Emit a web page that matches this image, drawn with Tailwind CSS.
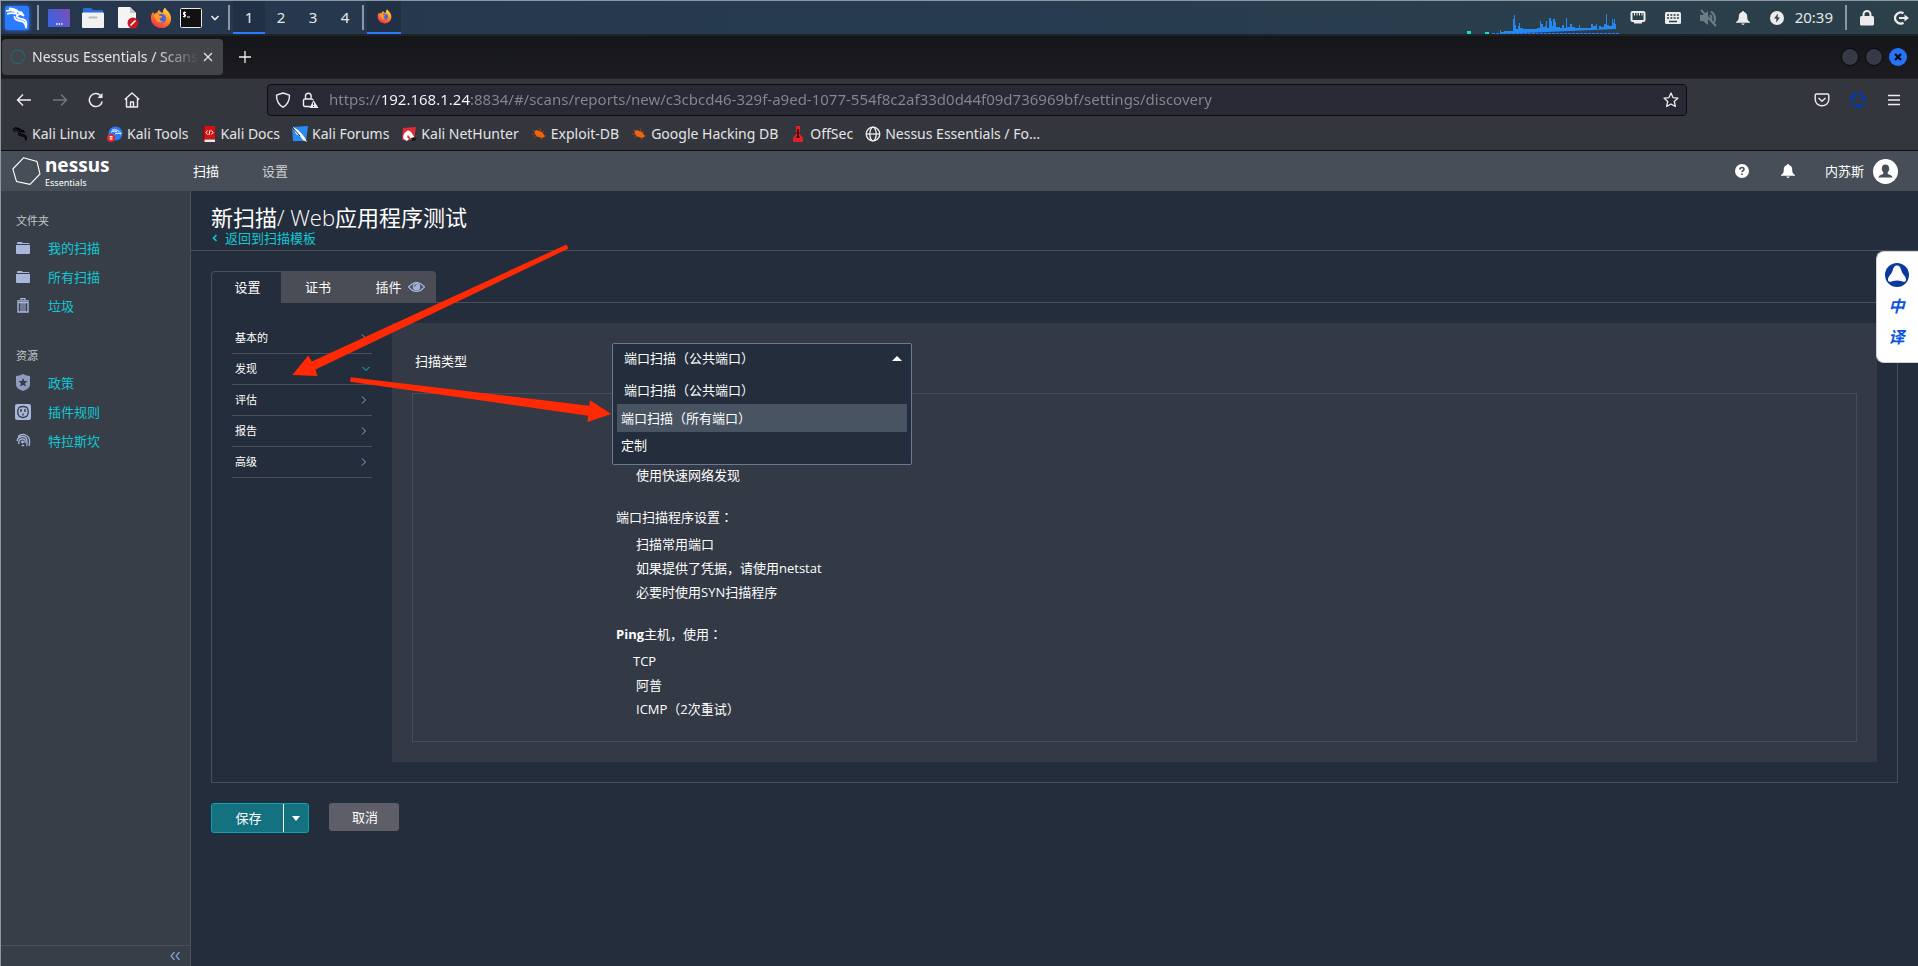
<!DOCTYPE html>
<html lang="zh-CN">
<head>
<meta charset="utf-8">
<title>Nessus Essentials / Scans</title>
<script src="https://cdn.jsdelivr.net/npm/@tailwindcss/browser@4"></script>
</head>
<body class="relative min-h-screen flex flex-col overflow-x-hidden border-t border-l border-[#8b98a1] bg-[#242d3b] text-white font-['Open_Sans','Noto_Sans_CJK_SC',sans-serif] text-[13px] leading-5">

<svg class="absolute size-0" aria-hidden="true">
  <defs>
    <linearGradient id="fx" x1="0.8" y1="0" x2="0.2" y2="1"><stop offset="0" stop-color="#ffe14a"/><stop offset=".45" stop-color="#ff8a25"/><stop offset="1" stop-color="#f0264e"/></linearGradient>
    <linearGradient id="desk" x1="0" y1="0.6" x2="1" y2="0.2"><stop offset="0" stop-color="#3c63e0"/><stop offset="1" stop-color="#7a4fb8"/></linearGradient>
    <symbol id="firefox" viewBox="0 0 24 24">
      <path d="M12.500 23C5.500 23 1 18 1 12c0-3 1-5 2.500-7 .1 1 .4 1.800 1 2.500C5.500 6.500 7 6 8 6.200 8 5 9 3.500 10 3c0 2 2.500 3 4 3.200 0-2 .5-4.200 2.500-5.700.5 3 6.500 5 6.500 12 0 6-4.500 10.500-10.500 10.500z" fill="url(#fx)"/>
      <circle cx="12.500" cy="12.500" r="5" fill="#4b62d8"/>
      <path d="M4 9c3-2 5-1 6.500.5 1 .2 2 .2 3 .5-.5 1.500-2 2-3 2.500 0 2 1.500 3.500 4 3-1.500 2-6.500 2-8-1.500C5.500 12 5 10.500 4 9z" fill="#ff9a2b"/>
    </symbol>
    <symbol id="dragon" viewBox="0 0 24 24">
      <path d="M1 5c4-1 8-1 11 1.500M2 8c4-1.500 7-1 10 0M4 2.500c4 0 7 1 9.500 3.500l3 .5 2 3-3.500-1.500c-3 .5-4 2-2.500 3.500s7 .5 8.500 4c.8 2 .5 4 0 6-.2-3.500-2-6-5.500-6.500-4-.5-6.500-2-6-5" fill="none" stroke="currentColor" stroke-width="1.800" stroke-linejoin="round"/>
    </symbol>
    <symbol id="bug" viewBox="0 0 16 16">
      <path d="M2 4l3 2M1 8h4M3 12l3-2M9 2l1 4M13 5l-2 2M15 10l-3-.5M11 14l-1-3" stroke="#9a4212" stroke-width="1" fill="none"/>
      <path d="M3.500 5.500C5 3.500 7 4 8.500 5.200c2.500 0 4 2.300 5.300 5.300-1.500 1.500-4 1.800-5.800.6C5.500 11 4 8.500 3.500 5.500z" fill="#f0640f"/>
    </symbol>
    <symbol id="folder" viewBox="0 0 14 12"><path d="M1 2V1q0-1 1-1h3.500q1 0 1 1h6q1 0 1 1z" fill="#a9b6dc"/><path d="M0 3h14v8q0 1-1 1H1q-1 0-1-1z" fill="#a9b6dc"/></symbol>
    <symbol id="bell" viewBox="0 0 14 14"><path d="M7 0q1 0 1 1c2.400.6 3.200 2.400 3.200 4.500 0 3 .6 4.300 2.800 5.500v.800H0V11c2.200-1.200 2.800-2.500 2.800-5.500C2.800 3.400 3.600 1.600 6 1q0-1 1-1z" fill="currentColor"/><path d="M5.300 12.600h3.400q-.4 1.400-1.700 1.400t-1.700-1.400z" fill="currentColor"/></symbol>
    <symbol id="mark" viewBox="0 0 24 24"><circle cx="12" cy="12" r="12" fill="#0a3a9c"/><path d="M12 2.500c3 0 3.600 2.500 4.500 5.500s4.500 5.500 4.500 8.500c0 3-3 2.500-5 1.500q-4-1.200-8 0c-2 1-5 1.500-5-1.500 0-3 3.600-5.500 4.500-8.500S9 2.500 12 2.500z" fill="var(--hole)"/></symbol>
  </defs>
</svg>

<!-- Desktop panel -->
<header class="flex items-stretch h-[33px] shrink-0 bg-linear-to-r from-[#26364d] via-[#263b50] to-[#2c404a] text-[#e4e8ea] font-['Noto_Sans',sans-serif] text-[15px]">
  <div class="flex items-center pl-1">
    <button aria-label="Applications" class="size-6 bg-[#2a7bff] rounded-xs shadow-[0_0_4px_#2a7bff] flex items-center justify-center text-white"><svg class="size-6"><use href="#dragon"/></svg></button>
    <span class="ml-2 w-0.5 h-[25px] bg-[#8b98a3]"></span>
    <button aria-label="Desktop" class="ml-[9px] w-[22px] h-[18px]"><svg viewBox="0 0 22 18" class="w-full h-full"><rect width="22" height="18" rx="1" fill="url(#desk)"/><path d="M8 15h1.500M10.500 15h1.500M13 15h1.500" stroke="#fff" stroke-width="1.500"/></svg></button>
    <button aria-label="Files" class="ml-3 w-[22px] h-5"><svg viewBox="0 0 22 20" class="w-full h-full"><path d="M1 6V1q0-1 1-1h7l2 2h9q1 0 1 1v3z" fill="#2b6cdc"/><rect y="4.500" width="22" height="15.500" rx="1" fill="#f2f2f2"/><rect x="6.500" y="8.500" width="9" height="2" rx="1" fill="#bbb"/></svg></button>
    <button aria-label="Text editor" class="ml-3.5 w-[22px] h-[22px]"><svg viewBox="0 0 22 22" class="w-full h-full"><path d="M1 0h11l6 6v15H1q-1 0-1-1V1q0-1 1-1z" fill="#f4f4f4"/><path d="M12 0l6 6h-6z" fill="#c8c8c8"/><circle cx="15" cy="16" r="5.500" fill="#c7161d"/><path d="M12.500 18.500l5-5" stroke="#fff" stroke-width="1.600"/></svg></button>
    <button aria-label="Firefox" class="ml-2.5 size-[22px]"><svg class="size-full"><use href="#firefox"/></svg></button>
    <button aria-label="Terminal" class="ml-2 w-[22px] h-5"><svg viewBox="0 0 22 20" class="w-full h-full"><rect x=".5" y=".5" width="21" height="19" rx="1" fill="#111" stroke="#e8e8e8"/><path d="M6 4.500H3.500v2H5.500v2H3M4.500 3.500v6M7 9h3" stroke="#fff" fill="none"/></svg></button>
    <button aria-label="More" class="ml-2 w-2.5 h-2"><svg viewBox="0 0 10 8" class="w-full h-full"><path d="M1.500 2l3.500 3.500L8.500 2" fill="none" stroke="#e8e8e8" stroke-width="1.600"/></svg></button>
    <span class="ml-2 w-0.5 h-[25px] bg-[#8b98a3]"></span>
  </div>
  <nav class="flex ml-[3px]" aria-label="Workspaces">
    <button class="w-8 pb-0.5 bg-[#213044] shadow-[inset_0_-2px_#2a7bff]">1</button>
    <button class="w-8 pb-0.5">2</button>
    <button class="w-8 pb-0.5">3</button>
    <button class="w-8 pb-0.5">4</button>
  </nav>
  <div class="flex items-center ml-px"><span class="w-0.5 h-[25px] bg-[#8b98a3]"></span></div>
  <button aria-label="Firefox window" class="ml-[3px] w-[34px] bg-[#213044] border-b-2 border-[#2a7bff] flex items-center justify-center"><svg class="size-[15px]"><use href="#firefox"/></svg></button>
  <div class="ml-auto flex items-center">
    <svg class="self-end w-[153px] h-5" viewBox="0 0 153 20" aria-label="CPU graph"><path d="M0 18.500h4M18 19.500h4" stroke="#12e0c8" stroke-width="3"/><path d="M25 19.500h128" stroke="#2a7bff" stroke-dasharray="3 1"/><path d="M33 20v-4h1v2h3v-1h9v-12h1v-4h1v10h1v4h2v-3h1v-3h1v5h3v1h14v-1h3v-7h1v3h2v3h2v-1h1v-5h1v7h2v-10h2v3h1v5h1v-7h2v3h1v5h4v1h2v-3h2v3h2v-10h1v9h3v-3h2v3h3v1h4v-3h1v3h11v-4h2v2h3v-2h1v5h2v-3h2v1h3v-3h2v-11h1v12h2v1h3v-7h1v4h1v-4h1v5h1v5z" fill="#2488ee"/></svg>
    <svg class="ml-[10px] w-4 h-[15px]" viewBox="0 0 16 15"><rect x="1.500" y="2" width="13" height="9" rx="1" fill="none" stroke="#ececec" stroke-width="2"/><path d="M4 12h8v1.500H4z" fill="#ececec"/><path d="M4.500 2v3.500M7 2v3.500M9.500 2v3.500M12 2v3.500" stroke="#ececec"/></svg>
    <svg class="ml-[19px] w-4 h-3" viewBox="0 0 16 12"><rect width="16" height="12" rx="1.500" fill="#ececec"/><path d="M2 3h12M2 6h12" stroke="#2b3e4a" stroke-width="1.600" stroke-dasharray="2 1.300"/><path d="M4 9.500h8" stroke="#2b3e4a" stroke-width="1.500"/></svg>
    <svg class="ml-[18px] w-[19px] h-[18px]" viewBox="0 0 19 18" fill="none" stroke="#6d7d86" stroke-width="2"><path d="M1 6h3l5-4v14l-5-4H1z" fill="#6d7d86" stroke="none"/><path d="M11 6q3 3 0 6M12 2.500q6 5 3 11M2 1l15 16"/></svg>
    <svg class="ml-[18px] w-3.5 h-3.5 text-[#ececec]"><use href="#bell"/></svg>
    <svg class="ml-5 size-3.5" viewBox="0 0 14 14"><circle cx="7" cy="7" r="7" fill="#ececec"/><path d="M8 2.500L4 7.500h2.500L6 11.500l4-5H7.500z" fill="#2b3e4a"/></svg>
    <time class="ml-[11px] pb-0.5">20:39</time>
    <span class="ml-3 w-0.5 h-[25px] bg-[#8b98a3]"></span>
    <button aria-label="Lock screen" class="ml-[13px]"><svg class="w-3.5 h-4" viewBox="0 0 14 16"><rect y="6" width="14" height="9.500" rx="1.500" fill="#ececec"/><path d="M3.500 7V4.500a3.500 3.500 0 017 0V7" fill="none" stroke="#ececec" stroke-width="2"/></svg></button>
    <button aria-label="Log out" class="ml-5 mr-[9px]"><svg class="w-[15px] h-3.5" viewBox="0 0 15 14"><path d="M9.500 2.300A5.500 5.500 0 109.500 11.700" fill="none" stroke="#ececec" stroke-width="2.200"/><path d="M5 7h6" stroke="#ececec" stroke-width="2"/><path d="M10.500 3.500L15 7l-4.500 3.500z" fill="#ececec"/></svg></button>
  </div>
</header>

<!-- Browser window -->
<div class="shrink-0 bg-[#34363d] text-[#e4e4e6] font-['Noto_Sans',sans-serif] text-[14px]">
  <div class="flex items-center h-[44px] border-t-2 border-[#20232a] bg-linear-to-b from-[#15161a] to-[#1b1b20]">
    <div class="flex items-center w-[221px] h-9 ml-px rounded bg-[#43444a] pl-2">
      <svg class="size-4 shrink-0" viewBox="0 0 16 16"><path d="M6 .8l7 1.500 2.200 6.200-4.600 6.300-6.700-.6L.8 8.600 2.200 3.500z" fill="none" stroke="#1d6c7c"/></svg>
      <span class="ml-1.5 w-[167px] overflow-hidden whitespace-nowrap mask-r-from-75% mask-r-to-100%">Nessus Essentials / Scans</span>
      <button aria-label="Close tab" class="ml-1"><svg class="size-2.5" viewBox="0 0 10 10"><path d="M1 1l8 8M9 1L1 9" stroke="#e4e4e6" stroke-width="1.200"/></svg></button>
    </div>
    <button aria-label="New tab" class="ml-4"><svg class="size-3" viewBox="0 0 12 12"><path d="M6 0v12M0 6h12" stroke="#f0f0f0" stroke-width="1.300"/></svg></button>
    <div class="ml-auto mr-[11px] flex gap-1.5">
      <button aria-label="Minimize" class="size-[18px] rounded-full bg-[#353a46] border border-[#08080a]"></button>
      <button aria-label="Maximize" class="size-[18px] rounded-full bg-[#353a46] border border-[#08080a]"></button>
      <button aria-label="Close" class="size-[18px] rounded-full bg-[#2673f5] flex items-center justify-center"><svg class="size-2" viewBox="0 0 8 8"><path d="M1 1l6 6M7 1L1 7" stroke="#0a0a12" stroke-width="2.200"/></svg></button>
    </div>
  </div>
  <div class="flex items-center h-[38px] pt-1 border-t border-[#22232a]">
    <div class="flex items-center gap-5 pl-[15px] w-[266px] shrink-0">
      <button aria-label="Back"><svg class="size-4" viewBox="0 0 16 16" fill="none" stroke="#eee" stroke-width="1.400"><path d="M15 8H1.500M7 2.500L1.500 8 7 13.500"/></svg></button>
      <button aria-label="Forward"><svg class="size-4" viewBox="0 0 16 16" fill="none" stroke="#76777d" stroke-width="1.400"><path d="M1 8h13.500M9 2.500L14.500 8 9 13.500"/></svg></button>
      <button aria-label="Reload"><svg class="size-4" viewBox="0 0 16 16" fill="none" stroke="#eee" stroke-width="1.500"><path d="M14.200 9.500A6.500 6.500 0 1112.500 3.500"/><path d="M14.500 1v5H9.500z" fill="#eee" stroke="none"/></svg></button>
      <button aria-label="Home"><svg class="size-4" viewBox="0 0 16 16" fill="none" stroke="#eee" stroke-width="1.400" stroke-linejoin="round"><path d="M.8 7.500L8 1l7.200 6.500M2.500 6.500V15h11V6.500M6.500 15v-5h3v5"/></svg></button>
    </div>
    <label class="flex items-center flex-1 h-8 max-w-[1420px] rounded border border-[#0d0d11] bg-[#282935] px-[7px]">
      <svg class="size-4 shrink-0" viewBox="0 0 16 16"><path d="M8 1l6.500 2.200c0 5-1.200 9-6.500 12C2.700 12.200 1.500 8.200 1.500 3.200z" fill="none" stroke="#eee" stroke-width="1.400" stroke-linejoin="round"/></svg>
      <svg class="ml-[11px] w-[17px] h-4 shrink-0" viewBox="0 0 17 16"><path d="M8 14.500H3q-1.500 0-1.500-1.500V8.500Q1.500 7 3 7h6.500q1.200 0 1.500 1M3.500 7V4a2.800 2.800 0 015.600 0v3" fill="none" stroke="#eee" stroke-width="1.400"/><path d="M11.500 8l5 8h-9z" fill="#eee"/><path d="M11.500 10.500v2.500M11.500 14v1" stroke="#282935"/></svg>
      <input aria-label="Address" value="https://192.168.1.24:8834/#/scans/reports/new/c3cbcd46-329f-a9ed-1077-554f8c2af33d0d44f09d736969bf/settings/discovery" class="ml-2.5 flex-1 min-w-0 pb-px outline-none text-[15px] text-transparent bg-clip-text bg-[linear-gradient(90deg,#85868e_52px,#fbfbfe_52px,#fbfbfe_142px,#85868e_142px)]">
      <button type="button" aria-label="Bookmark this page"><svg class="size-4" viewBox="0 0 16 16"><path d="M8 1l2 4.600 5 .5-3.700 3.400 1 5L8 12l-4.300 2.500 1-5L1 6.100l5-.5z" fill="none" stroke="#eee" stroke-width="1.300" stroke-linejoin="round"/></svg></button>
    </label>
    <div class="ml-auto flex items-center gap-5 pr-4">
      <button aria-label="Save to Pocket"><svg class="size-4" viewBox="0 0 16 16" fill="none" stroke="#eee" stroke-width="1.400" stroke-linejoin="round"><path d="M2.500 2h11q1.300 0 1.300 1.300V7.500a6.800 6.300 0 01-13.600 0V3.300Q1.200 2 2.500 2z"/><path d="M4.500 6L8 9.200 11.500 6"/></svg></button>
      <button aria-label="Translate extension"><svg class="size-4 [--hole:#34363d]"><use href="#mark"/></svg></button>
      <button aria-label="Menu"><svg class="size-4" viewBox="0 0 16 16"><path d="M2 3.500h12M2 8h12M2 12.500h12" stroke="#eee" stroke-width="1.300"/></svg></button>
    </div>
  </div>
  <nav aria-label="Bookmarks" class="flex items-center gap-3 h-[35px] pt-0.5 pl-[11px] border-b border-[#0d0d11] whitespace-nowrap">
    <a href="#" class="flex items-center gap-1"><svg class="size-4 text-black"><use href="#dragon"/></svg>Kali Linux</a>
    <a href="#" class="flex items-center gap-1"><svg class="size-4" viewBox="0 0 16 16"><circle cx="8.500" cy="7.500" r="7" fill="#2a7bf0"/><path d="M5 4c4-.500 7 0 9 4-2-1-4-1-6 0M4 6c2-1 5-1 6 0" fill="none" stroke="#fff"/><circle cx="4" cy="12" r="4" fill="#e02a2a"/><path d="M2.500 10.500h3M3.300 10.500v3.500M4.800 10.500v3.500" stroke="#fff" stroke-width=".8"/></svg>Kali Tools</a>
    <a href="#" class="flex items-center gap-1"><svg class="size-4" viewBox="0 0 16 16"><path d="M2 0h12v13H2z" fill="#d81010"/><path d="M2 13.500h12V16H2z" fill="#efe6e6"/><path d="M2 0h1.500v16H2z" fill="#8a0c0c"/><path d="M6.500 4.500L5 6.500l1.500 2M10.500 4.500L12 6.500l-1.500 2M9 4L8 9" stroke="#fff" fill="none"/></svg>Kali Docs</a>
    <a href="#" class="flex items-center gap-1"><svg class="size-4" viewBox="0 0 16 16"><path d="M0 1l16-1-2 15L1 15z" fill="#2a8af5"/><path d="M1 1l5 3 4 4 3 4 2 4-4-2-3-4-4-2z" fill="#fff"/><path d="M0 1l8 9" stroke="#222"/></svg>Kali Forums</a>
    <a href="#" class="flex items-center gap-1"><svg class="size-4" viewBox="0 0 16 16"><path d="M2 2l13-1-2 13H1z" fill="#e12a35"/><path d="M3 8q4-6 7-2l4 6-3 2-4-5q-2 2 1 4l-2 2Q0 13 3 8z" fill="#fff"/><path d="M10 12l4-1 1 3-4 1z" fill="#111"/></svg>Kali NetHunter</a>
    <a href="#" class="flex items-center gap-1"><svg class="size-4"><use href="#bug"/></svg>Exploit-DB</a>
    <a href="#" class="flex items-center gap-1"><svg class="size-4"><use href="#bug"/></svg>Google Hacking DB</a>
    <a href="#" class="flex items-center gap-1"><svg class="size-4" viewBox="0 0 16 16"><path d="M6 0h4v8l3 4v4H3v-4l3-4z" fill="#e3202a"/><path d="M8 3v9M6.500 7h3M6.500 11h3" stroke="#2a0508" stroke-width="1.500"/></svg>OffSec</a>
    <a href="#" class="flex items-center gap-1"><svg class="size-4" viewBox="0 0 16 16" fill="none" stroke="#eee" stroke-width="1.300"><circle cx="8" cy="8" r="6.800"/><ellipse cx="8" cy="8" rx="3.200" ry="6.800"/><path d="M1 8h14"/></svg>Nessus Essentials / Fo…</a>
  </nav>
</div>

<!-- Nessus top bar -->
<header class="flex items-center h-10 shrink-0 bg-[#474e57] pl-[11px] pr-5">
  <a href="#" class="flex items-center w-[181px]" aria-label="nessus Essentials">
    <svg class="w-[29px] h-7" viewBox="0 0 29 28"><path d="M11.500 .800L25 4.500l3 12.500-10 10.300-13.500-2.800L.8 12z" fill="none" stroke="#fff" stroke-width="1.100"/></svg>
    <span class="ml-1 flex flex-col font-['Noto_Sans',sans-serif]"><span class="text-[19px] leading-6 font-bold">nessus</span><span class="text-[9px] leading-3">Essentials</span></span>
  </a>
  <nav class="flex gap-[43px]"><a href="#">扫描</a><a href="#" class="text-[#cdd0d4]">设置</a></nav>
  <div class="ml-auto flex items-center">
    <button aria-label="Help"><svg class="size-3.5" viewBox="0 0 14 14"><circle cx="7" cy="7" r="7" fill="#fff"/><path d="M5 5.500q0-2 2-2t2 1.700q0 1-1 1.500t-1 1.500M7 9.500v1.600" fill="none" stroke="#474e57" stroke-width="1.600"/></svg></button>
    <button aria-label="Notifications" class="ml-8"><svg class="size-3.5"><use href="#bell"/></svg></button>
    <button class="ml-[30px] flex items-center gap-[9px]">内苏斯<svg class="size-[25px]" viewBox="0 0 25 25"><circle cx="12.500" cy="12.500" r="12.500" fill="#fff"/><path d="M12.500 5.500c2.500 0 3.700 1.700 3.700 4 0 1.600-.6 2.900-1.500 3.700v1.500c.8 1 4.800 1.300 4.800 3.800H5.500c0-2.500 4-2.800 4.800-3.800v-1.500c-.9-.8-1.500-2.100-1.500-3.700 0-2.300 1.200-4 3.700-4z" fill="#474e57"/></svg></button>
  </div>
</header>

<div class="flex flex-1">
  <!-- Sidebar -->
  <aside class="flex flex-col w-[190px] shrink-0 bg-[#383e47] border-r border-[#4b4f59] text-[#10c8d4]">
    <h2 class="pl-[15px] pt-5 text-[11px] text-[#c3c6ca]">文件夹</h2>
    <ul class="mt-0.5 pl-[15px]">
      <li><a href="#" class="flex items-center h-[29px]"><svg class="w-3.5 h-3"><use href="#folder"/></svg><span class="ml-[18px]">我的扫描</span></a></li>
      <li><a href="#" class="flex items-center h-[29px]"><svg class="w-3.5 h-3"><use href="#folder"/></svg><span class="ml-[18px]">所有扫描</span></a></li>
      <li><a href="#" class="flex items-center h-[29px]"><svg class="w-3.5 h-[15px]" viewBox="0 0 14 15"><path d="M1 2.800h12M5 2V.7h4V2" fill="none" stroke="#a9b6dc" stroke-width="1.300"/><path d="M2 4.500h10V14H2z" fill="none" stroke="#a9b6dc" stroke-width="1.400"/><path d="M5 5v9M7 5v9M9 5v9" stroke="#a9b6dc"/></svg><span class="ml-[18px]">垃圾</span></a></li>
    </ul>
    <h2 class="pl-[15px] pt-[26px] text-[11px] text-[#c3c6ca]">资源</h2>
    <ul class="mt-0.5 pl-[13px]">
      <li><a href="#" class="flex items-center h-[29px]"><svg class="w-[18px] h-[17px]" viewBox="0 0 18 17"><path d="M9 0q3.500 2 7 2v8.500q0 4-7 6.500-7-2.500-7-6.500V2q3.500 0 7-2z" fill="#8f9cbf"/><path d="M9 4l1.300 2.900 3.200.3-2.400 2.100.7 3.200L9 10.900l-2.800 1.600.7-3.200-2.400-2.100 3.200-.3z" fill="#383e47"/></svg><span class="ml-4">政策</span></a></li>
      <li><a href="#" class="flex items-center h-[29px]"><svg class="w-[18px] h-4" viewBox="0 0 18 16"><rect x="1" width="16" height="16" rx="2" fill="#a9b6dc"/><path d="M5 3.500q4-2 8 0 2.500 4.500 0 8.500-4 3-8 0-2.500-4 0-8.500z" fill="none" stroke="#383e47" stroke-width="1.300"/><path d="M7 5v3M11 5v3M9 9.500v2" stroke="#383e47" stroke-width="1.500"/></svg><span class="ml-4">插件规则</span></a></li>
      <li><a href="#" class="flex items-center h-[29px]"><svg class="w-[18px] h-[15px]" viewBox="0 0 18 15" fill="none" stroke="#a9b6dc" stroke-width="1.300"><path d="M4 3.500Q8 0 12.500 2.500T15 13M3 8q1-4.500 5.500-4.500T13 8.500t-.5 4M5 11Q4 6.500 8 6t3 4"/><circle cx="8.500" cy="9" r=".8" fill="#a9b6dc"/><path d="M7.500 12.500q1.500.5 2.500-.5"/></svg><span class="ml-4">特拉斯坎</span></a></li>
    </ul>
    <div class="mt-auto flex justify-end items-center h-[21px] pr-2.5 border-t border-[#4b4f59]">
      <button aria-label="Collapse sidebar"><svg class="w-2.5 h-2" viewBox="0 0 10 8"><path d="M4.500 0L1 4l3.500 4M9.500 0L6 4l3.500 4" fill="none" stroke="#8ba6d8" stroke-width="1.200"/></svg></button>
    </div>
  </aside>

  <!-- Content -->
  <main class="flex-1 min-w-0">
    <div class="h-[60px] pl-5 pt-[13px] border-b border-[#4b4f59]">
      <h1 class="text-[22px] leading-[26px]">新扫描<span class="font-light">/ Web</span>应用程序测试</h1>
      <a href="#" class="flex items-center gap-[7px] pl-px leading-4 text-[#10c8d4]"><svg class="w-1.5 h-2" viewBox="0 0 6 8"><path d="M4.500 1L1.500 4l3 3" fill="none" stroke="currentColor" stroke-width="1.600"/></svg>返回到扫描模板</a>
    </div>

    <div class="pl-5 pr-5 pt-5">
      <div class="flex h-8">
        <div role="tablist" class="flex">
          <button role="tab" aria-selected="true" class="w-[70px] pl-0.5 pb-0.5 rounded-tl border-t border-l border-[#4b4f59]">设置</button>
          <button role="tab" class="w-[72px] pl-0.5 pb-px bg-[#4a4c56]">证书</button>
          <button role="tab" class="w-[83px] pl-[11px] pb-px bg-[#4a4c56] rounded-tr flex items-center justify-center gap-1.5">插件<svg class="w-[17px] h-2.5" viewBox="0 0 17 10"><path d="M.5 5q8-9 16 0-8 9-16 0z" fill="none" stroke="#a3b0d8" stroke-width="1.300"/><circle cx="8.500" cy="4.800" r="3.800" fill="#a3b0d8"/><path d="M6.500 4.500q.5-2 2-2" stroke="#4a4c56" fill="none"/></svg></button>
        </div>
        <div class="flex-1 border-b border-[#4b4f59]"></div>
      </div>
      <section class="flex border border-t-0 border-[#4b4f59] pt-5 pb-5 pl-5 pr-5">
        <ul class="w-[140px] shrink-0 text-[11px]">
          <li class="flex items-center justify-between h-[31px] pl-[3px] pr-[5px] border-b border-[#4b4f59]"><a href="#">基本的</a><svg class="w-1.5 h-2" viewBox="0 0 6 8"><path d="M1 .5L4.500 4 1 7.500" fill="none" stroke="#8ba6d8"/></svg></li>
          <li class="flex items-center justify-between h-[31px] pl-[3px] pr-[2px] border-b border-[#4b4f59]"><a href="#">发现</a><svg class="w-2 h-1.5" viewBox="0 0 8 6"><path d="M.5 1L4 4.500 7.500 1" fill="none" stroke="#10c8d4"/></svg></li>
          <li class="flex items-center justify-between h-[31px] pl-[3px] pr-[5px] border-b border-[#4b4f59]"><a href="#">评估</a><svg class="w-1.5 h-2" viewBox="0 0 6 8"><path d="M1 .5L4.500 4 1 7.500" fill="none" stroke="#8ba6d8"/></svg></li>
          <li class="flex items-center justify-between h-[31px] pl-[3px] pr-[5px] border-b border-[#4b4f59]"><a href="#">报告</a><svg class="w-1.5 h-2" viewBox="0 0 6 8"><path d="M1 .5L4.500 4 1 7.500" fill="none" stroke="#8ba6d8"/></svg></li>
          <li class="flex items-center justify-between h-[31px] pl-[3px] pr-[5px] border-b border-[#4b4f59]"><a href="#">高级</a><svg class="w-1.5 h-2" viewBox="0 0 6 8"><path d="M1 .5L4.500 4 1 7.500" fill="none" stroke="#8ba6d8"/></svg></li>
        </ul>
        <div class="flex-1 ml-5 px-5 pt-5 pb-5 bg-[#333945]">
          <div class="flex items-start h-[50px] pl-[3px]">
            <label for="scan-type" class="w-[197px] pt-2">扫描类型</label>
            <div class="relative w-[300px]">
              <div class="absolute inset-x-0 top-0 rounded-xs border border-[#6b7a94] bg-[#242d3b] pb-[17px]">
                <div class="flex items-center pr-[9px]">
                  <select id="scan-type" class="flex-1 h-7 pl-[11px] appearance-none outline-none"><option>端口扫描（公共端口）</option></select>
                  <svg class="w-2.5 h-[5px]" viewBox="0 0 10 5"><path d="M5 0l5 5H0z" fill="#fff"/></svg>
                </div>
                <ul role="listbox" aria-label="扫描类型" class="px-1 pt-[5px]">
                  <li role="option" aria-selected="true" class="h-[27px] leading-[27px] pl-[7px]">端口扫描（公共端口）</li>
                  <li role="option" class="h-7 leading-7 pl-1 bg-[#485462]">端口扫描（所有端口）</li>
                  <li role="option" class="h-[15px] pt-[3px] pl-1">定制</li>
                </ul>
              </div>
            </div>
          </div>
          <div class="h-[349px] pl-[203px] pt-[71px] border border-[#484c58]">
            <ul class="pl-5"><li>使用快速网络发现</li></ul>
            <h3 class="mt-[22px]">端口扫描程序设置<span class="font-['Noto_Sans_CJK_TC']" lang="zh-TW">：</span></h3>
            <ul class="mt-[5px] pl-5 leading-6"><li>扫描常用端口</li><li>如果提供了凭据，请使用netstat</li><li>必要时使用SYN扫描程序</li></ul>
            <h3 class="mt-5"><b>Ping</b>主机，使用<span class="font-['Noto_Sans_CJK_TC']" lang="zh-TW">：</span></h3>
            <ul class="mt-[5px] pl-5 leading-6"><li class="-ml-[3px]">TCP</li><li>阿普</li><li>ICMP（2次重试）</li></ul>
          </div>
        </div>
      </section>
      <div class="flex items-start mt-5">
        <div class="flex h-[30px] rounded-[3px] border border-[#0ba3b0] bg-[#14717f]">
          <button class="w-[71px] pl-0.5">保存</button>
          <button aria-label="更多保存选项" class="w-[25px] border-l border-white flex items-center justify-center"><svg class="w-2 h-[5px]" viewBox="0 0 8 5"><path d="M0 0h8L4 5z" fill="#fff"/></svg></button>
        </div>
        <button class="ml-5 w-[70px] h-7 pl-0.5 rounded-[3px] bg-[#5d5e67]">取消</button>
      </div>
    </div>
  </main>
</div>

<!-- Floating translation widget -->
<div class="absolute right-0 top-[250px] w-[42px] h-[112px] pt-[11px] pr-0.5 flex flex-col items-center gap-[7px] rounded-l-lg border border-r-0 border-[#cfd2d8] bg-white text-[#0a55dc] text-[16px] leading-6 font-bold italic">
  <svg class="size-6 shrink-0 [--hole:#fff]"><use href="#mark"/></svg>
  <button aria-label="中文">中</button>
  <button aria-label="翻译">译</button>
</div>

<!-- Annotation arrows -->
<svg class="absolute left-0 top-0 w-[640px] h-[440px] pointer-events-none" viewBox="1 1 640 440" fill="#ff2a04" aria-hidden="true">
  <path d="M566.500 244.500l2 4-253 121 2 6.500-25.200-1 16-19.500 3.500 6z"/>
  <path d="M350.700 377.300l238.600 28.400.7-5.400 21.300 13.700-24 8 1-6.300-238.300-34z"/>
</svg>
</body>
</html>
